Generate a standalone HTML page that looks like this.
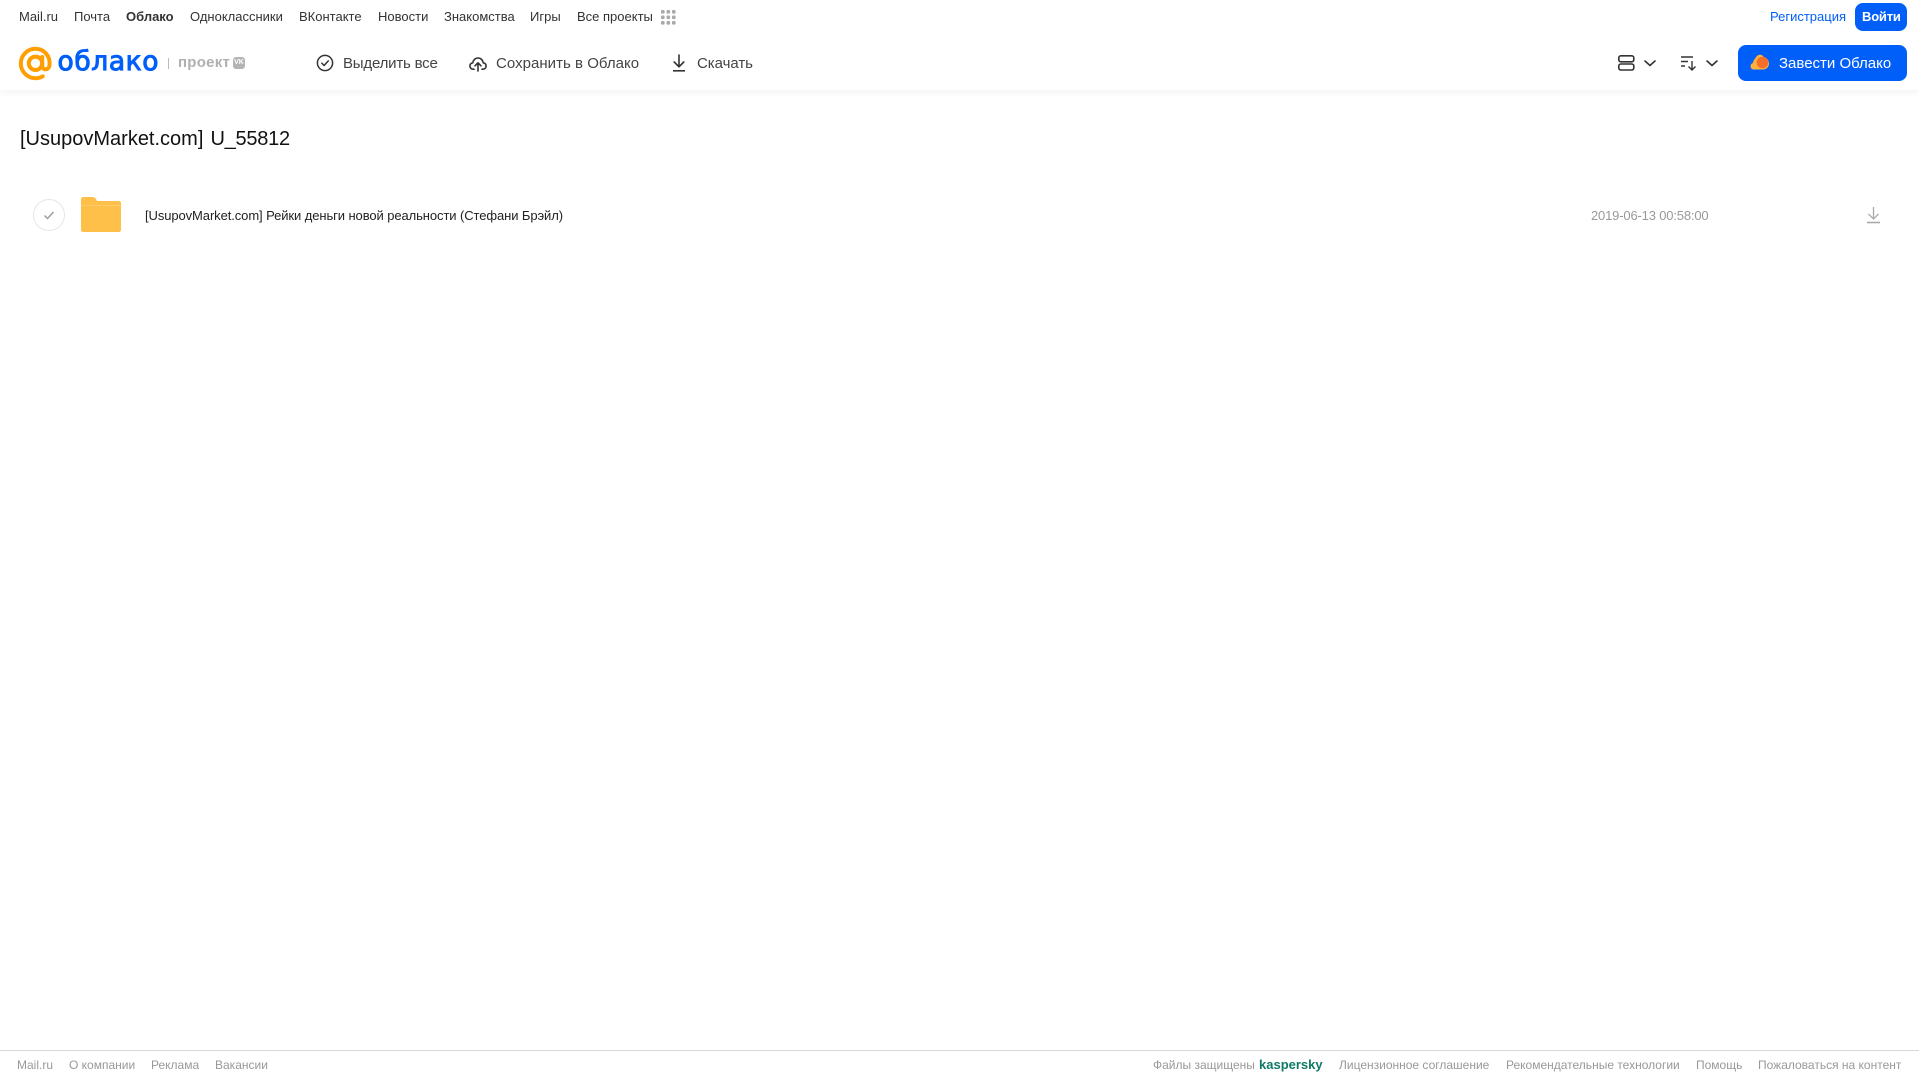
<!DOCTYPE html>
<html lang="ru"><head><meta charset="utf-8"><title>Облако</title>
<style>
html,body{margin:0;padding:0;background:#fff;width:1919px;height:1079px;overflow:hidden}
body{position:relative;font-family:"Liberation Sans",sans-serif}
.t{position:absolute;white-space:nowrap;line-height:20px;margin:0}
.n{font-size:13px;top:7px;color:#333}
.a{font-size:15px;top:53.500px;color:#444}
.f{font-size:12px;top:1055px;color:#999}
svg{position:absolute;overflow:visible}
#hd{position:absolute;left:0;top:0;width:1919px;height:90px;background:#fff;box-shadow:0 2px 8px rgba(0,0,0,.06)}
.btn{position:absolute;background:#005ff9;border-radius:8px}
</style></head><body>
<div id="hd"></div>
<span class="t n" style="left:19px">Mail.ru</span>
<span class="t n" style="left:74px">Почта</span>
<span class="t n" style="left:126px;font-weight:700">Облако</span>
<span class="t n" style="left:190px">Одноклассники</span>
<span class="t n" style="left:299px">ВКонтакте</span>
<span class="t n" style="left:378px">Новости</span>
<span class="t n" style="left:444px">Знакомства</span>
<span class="t n" style="left:530px">Игры</span>
<span class="t n" style="left:577px">Все проекты</span>
<svg style="left:661px;top:10px" width="15" height="15" fill="#aaa"><rect x="0" y="0" width="3.6" height="3.6" rx="1"/><rect x="5.5" y="0" width="3.6" height="3.6" rx="1"/><rect x="11" y="0" width="3.6" height="3.6" rx="1"/><rect x="0" y="5.5" width="3.6" height="3.6" rx="1"/><rect x="5.5" y="5.5" width="3.6" height="3.6" rx="1"/><rect x="11" y="5.5" width="3.6" height="3.6" rx="1"/><rect x="0" y="11" width="3.6" height="3.6" rx="1"/><rect x="5.5" y="11" width="3.6" height="3.6" rx="1"/><rect x="11" y="11" width="3.6" height="3.6" rx="1"/></svg>

<svg style="left:19px;top:47px" width="33" height="33" viewBox="0 0 33 33" fill="none" stroke="#ff9e00" stroke-width="4" stroke-linecap="round"><circle cx="16.5" cy="16.3" r="6.700"/><path d="M23.200 10v8.600c0 5 6.600 5 7.300-.4C31.600 8.500 24.500 1.800 16.500 1.800 8.400 1.800 1.800 8.400 1.800 16.500s6.600 14.700 14.700 14.700c2.800 0 5.200-.7 7.200-1.900"/></svg>
<svg style="left:0;top:0" width="240" height="90"><text x="57.500" y="70" font-family="'DejaVu Sans',sans-serif" font-size="26.500" fill="#005ff9" stroke="#005ff9" stroke-width="1" textLength="101">облако</text></svg>
<div style="position:absolute;left:168px;top:58px;width:1px;height:11px;background:#bbb"></div>
<span class="t" style="left:178px;top:53px;font-size:15px;font-weight:700;color:#b0b0b0;letter-spacing:.25px">проект</span>
<div style="position:absolute;left:233px;top:57px;width:12px;height:12px;border-radius:3px;background:#b4b4b4;color:#fff;font:700 7px/12px 'Liberation Sans',sans-serif;text-align:center">VK</div>

<svg style="left:316px;top:54px" width="18" height="18" viewBox="0 0 18 18" fill="none" stroke="#333" stroke-width="1.500"><circle cx="9" cy="9" r="7.600"/><path d="M5.800 9.200l2.300 2.300 4.200-4.600" stroke-linecap="round" stroke-linejoin="round"/></svg>
<span class="t a" style="left:343px;letter-spacing:-.2px">Выделить все</span>
<svg style="left:469px;top:54px" width="18" height="18" viewBox="0 0 18 18" fill="none" stroke="#333" stroke-width="1.600" stroke-linecap="round" stroke-linejoin="round"><path d="M5 15.200H4.200C2.300 15.200 .9 13.800 .9 12c0-1.700 1.200-3 2.900-3.200C4.100 6 6.300 4 9 4s4.900 2 5.200 4.800c1.700.2 2.900 1.500 2.900 3.200 0 1.800-1.400 3.200-3.300 3.200H13"/><path d="M9 17V9M6 11.800L9 8.800l3 3"/></svg>
<span class="t a" style="left:496px;letter-spacing:.03px">Сохранить в Облако</span>
<svg style="left:671px;top:54px" width="16" height="18" viewBox="0 0 16 18" fill="none" stroke="#333" stroke-width="1.600"><path d="M8 1v11.500M3.200 8L8 12.800 12.800 8" stroke-linejoin="round" stroke-linecap="round"/><path d="M2 16.800h12"/></svg>
<span class="t a" style="left:697px;letter-spacing:-.05px">Скачать</span>

<span class="t n" style="left:1770px;color:#005ff9">Регистрация</span>
<div class="btn" style="left:1855px;top:3px;width:52px;height:28px"></div>
<span class="t" style="left:1862px;top:7px;font-size:13px;font-weight:700;color:#fff;letter-spacing:-.2px">Войти</span>

<svg style="left:1618px;top:55px" width="17" height="16" viewBox="0 0 17 16" fill="none" stroke="#333" stroke-width="1.600"><rect x=".8" y=".8" width="15" height="6" rx="2"/><rect x=".8" y="9" width="15" height="6" rx="2"/></svg>
<svg style="left:1644px;top:60px" width="12" height="7" viewBox="0 0 12 7" fill="none" stroke="#333" stroke-width="1.600" stroke-linecap="round" stroke-linejoin="round"><path d="M1 1l5 4.500L11 1"/></svg>
<svg style="left:1681px;top:56px" width="16" height="15" viewBox="0 0 16 15" fill="none" stroke="#333" stroke-width="1.400"><path d="M0 1h12M0 5.500h7M0 10h4M11 5v9M7.500 10.500L11 14l3.500-3.500"/></svg>
<svg style="left:1706px;top:60px" width="12" height="7" viewBox="0 0 12 7" fill="none" stroke="#333" stroke-width="1.600" stroke-linecap="round" stroke-linejoin="round"><path d="M1 1l5 4.500L11 1"/></svg>

<div class="btn" style="left:1738px;top:45px;width:169px;height:36px"></div>
<svg style="left:1750px;top:54px" width="20" height="17" viewBox="0 0 20 17"><path d="M4 15.500C1.800 15.500.5 14 .5 12.200c0-1.500 1-2.800 2.400-3.200C3.300 6 5 4.700 6 3.200 7 1.500 8.500.8 10 .8c2 0 3.500 1.200 4 3 2.800.2 5 2.600 5 5.700 0 3.400-2.600 6-6 6z" fill="#ffb03a"/><circle cx="12.500" cy="8.500" r="5.800" fill="#f4702a"/></svg>
<span class="t a" style="left:1779px;color:#fff">Завести Облако</span>

<h1 class="t" style="left:20px;top:127px;font-size:20px;line-height:24px;font-weight:400;color:#111;word-spacing:1.500px">[UsupovMarket.com] <span style="letter-spacing:-.25px">U_55812</span></h1>

<svg style="left:33px;top:199px" width="32" height="32" viewBox="0 0 32 32" fill="#fff" stroke="#e6e6e6"><circle cx="16" cy="16" r="15.500"/><path d="M11.500 16.500l3 3 6-6.500" fill="none" stroke="#999" stroke-width="1.400"/></svg>
<svg style="left:81px;top:197px" width="40" height="35" viewBox="0 0 40 35"><path d="M2 0h9c2.500 0 4 1 5 4h22c1.100 0 2 .9 2 2V33c0 1.100-.9 2-2 2H2c-1.100 0-2-.9-2-2V2C0 .9.900 0 2 0z" fill="#ffc04a"/><rect x="0" y="8" width="40" height="1" fill="#ffcb66"/></svg>
<span class="t" style="left:145px;top:206px;font-size:13px;letter-spacing:-.09px;color:#222">[UsupovMarket.com] Рейки деньги новой реальности (Стефани Брэйл)</span>
<span class="t" style="left:1591px;top:206px;font-size:13px;letter-spacing:-.17px;color:#999">2019-06-13 00:58:00</span>
<svg style="left:1867px;top:207px" width="13" height="17" viewBox="0 0 13 17" fill="none" stroke="#aaa" stroke-width="1.300"><path d="M6.500 0v11.500M1.500 7l5 5 5-5"/><path d="M0 15.500h13" stroke-width="1.600"/></svg>

<div style="position:absolute;left:0;top:1050px;width:1919px;height:1px;background:#d8d8d8"></div>
<span class="t f" style="left:17px">Mail.ru</span>
<span class="t f" style="left:69px">О компании</span>
<span class="t f" style="left:151px">Реклама</span>
<span class="t f" style="left:215px">Вакансии</span>
<span class="t f" style="left:1153px">Файлы защищены</span>
<span class="t f" style="left:1259px;font-weight:700;font-size:13px;color:#0f7a66">kaspersky</span>
<span class="t f" style="left:1339px">Лицензионное соглашение</span>
<span class="t f" style="left:1506px">Рекомендательные технологии</span>
<span class="t f" style="left:1696px">Помощь</span>
<span class="t f" style="left:1758px">Пожаловаться на контент</span>
</body></html>
